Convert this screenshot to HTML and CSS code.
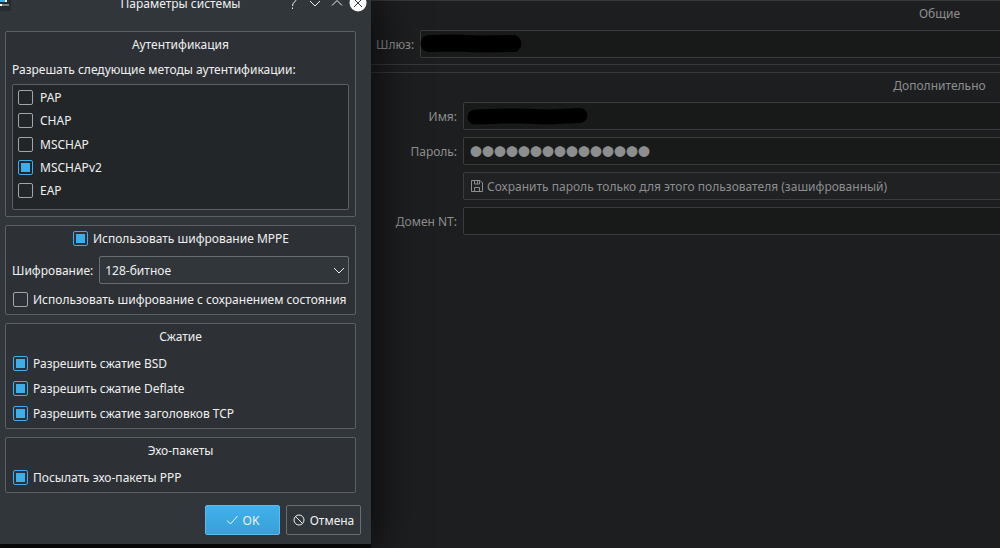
FILE: index.html
```html
<!DOCTYPE html>
<html lang="ru">
<head>
<meta charset="utf-8">
<title>Параметры системы</title>
<link rel="stylesheet" href="styles.css">
</head>
<body>
<div class="screen">
  <section class="dialog" role="dialog" aria-labelledby="dialog-title">
    <header class="titlebar">
      <svg class="app-icon" width="11" height="11" viewBox="0 0 11 11" aria-hidden="true">
        <path d="M0 5.500h11" stroke="#272b2f" stroke-width="11"/>
        <path d="M0 1h5" stroke="#3daee9" stroke-width="2"/><path d="M5 1h2" stroke="#fff" stroke-width="2"/>
        <path d="M0 5h2" stroke="#fff" stroke-width="2"/><path d="M2 5h7" stroke="#7b7f82" stroke-width="2"/>
      </svg>
      <h1 class="dialog-title" id="dialog-title">Параметры системы</h1>
      <div class="window-buttons">
        <button class="win-btn" aria-label="Справка"><svg width="18" height="18" viewBox="0 0 18 18"><path d="M6 6V5a3.500 3.500 0 1 1 5.500 3Q9.500 9.500 9.500 12M9.500 13.500v1.500"/></svg></button>
        <button class="win-btn" aria-label="Свернуть"><svg width="18" height="18" viewBox="0 0 18 18"><path d="M5 7l5 5 5-5"/></svg></button>
        <button class="win-btn" aria-label="Развернуть"><svg width="18" height="18" viewBox="0 0 18 18"><path d="M5 11.500l5-5 5 5"/></svg></button>
        <button class="win-btn" aria-label="Закрыть"><svg width="18" height="18" viewBox="0 0 18 18"><circle cx="9" cy="9" r="8.500" fill="#fcfcfc" stroke="none"/><path class="cross" d="M5 5l8 8M13 5l-8 8"/></svg></button>
      </div>
    </header>

    <div class="dialog-body">
      <section class="group auth">
        <h2 class="group-title">Аутентификация</h2>
        <p class="hint">Разрешать следующие методы аутентификации:</p>
        <div class="list">
          <label class="check"><input type="checkbox"><span>PAP</span></label>
          <label class="check"><input type="checkbox"><span>CHAP</span></label>
          <label class="check"><input type="checkbox"><span>MSCHAP</span></label>
          <label class="check"><input type="checkbox" checked><span>MSCHAPv2</span></label>
          <label class="check"><input type="checkbox"><span>EAP</span></label>
        </div>
      </section>

      <section class="group mppe">
        <label class="check centered"><input type="checkbox" checked><span>Использовать шифрование MPPE</span></label>
        <div class="field">
          <label for="cipher">Шифрование:</label>
          <div class="combo">
            <select id="cipher"><option>128-битное</option></select>
            <svg class="combo-arrow" width="12" height="8" viewBox="0 0 12 8" aria-hidden="true"><path d="M1 1l5 5 5-5"/></svg>
          </div>
        </div>
        <label class="check"><input type="checkbox"><span>Использовать шифрование с сохранением состояния</span></label>
      </section>

      <section class="group options">
        <h2 class="group-title">Сжатие</h2>
        <label class="check"><input type="checkbox" checked><span>Разрешить сжатие BSD</span></label>
        <label class="check"><input type="checkbox" checked><span>Разрешить сжатие Deflate</span></label>
        <label class="check"><input type="checkbox" checked><span>Разрешить сжатие заголовков TCP</span></label>
      </section>

      <section class="group options">
        <h2 class="group-title">Эхо-пакеты</h2>
        <label class="check"><input type="checkbox" checked><span>Посылать эхо-пакеты PPP</span></label>
      </section>
    </div>

    <footer class="actions">
      <button class="btn primary"><svg width="12" height="12" viewBox="0 0 12 12" aria-hidden="true"><path d="M1 6.500l3.500 3.500L11.500 2"/></svg>OK</button>
      <button class="btn"><svg width="12" height="12" viewBox="0 0 12 12" aria-hidden="true"><circle cx="6" cy="6" r="5"/><path d="M2.500 2.500l7 7"/></svg>Отмена</button>
    </footer>
  </section>

  <main class="settings">
    <section class="panel general">
      <h2 class="group-title">Общие</h2>
      <div class="panel-form">
        <label for="gateway">Шлюз:</label>
        <div class="entry">
          <input id="gateway" type="text">
          <svg class="mask" width="110" height="28" viewBox="0 0 110 28" aria-hidden="true"><path d="M9 13.500L34 13 60 14 93 13.500"/></svg>
        </div>
      </div>
    </section>
    <section class="panel extra">
      <h2 class="group-title">Дополнительно</h2>
      <div class="panel-form">
        <label for="user">Имя:</label>
        <div class="entry">
          <input id="user" type="text">
          <svg class="mask" width="130" height="28" viewBox="0 0 130 28" aria-hidden="true"><path class="thin" d="M12 15L40 14 60 14 84 15 117 13.500"/></svg>
        </div>
        <label for="password">Пароль:</label>
        <div class="entry"><input id="password" class="secret" type="text" value="●●●●●●●●●●●●●●●"></div>
        <span></span>
        <button class="store"><svg width="12" height="12" viewBox="0 0 12 12" aria-hidden="true"><path d="M.5.500H9L11.500 3v8.500H.5zM3.500 11.500V7.500h5v4M3.500.500v3.500h5V.500M6.500 1v2.500"/></svg>Сохранить пароль только для этого пользователя (зашифрованный)</button>
        <label for="domain">Домен NT:</label>
        <div class="entry"><input id="domain" type="text"></div>
      </div>
    </section>
  </main>
</div>
</body>
</html>
```
FILE: styles.css
```css
* {
  box-sizing: border-box;
}

body {
  margin: 0;
  background: #0c0c0c;
  color: #eff0f1;
  font: 12px/17px "Noto Sans", sans-serif;
}

button,
input,
select {
  margin: 0;
  color: inherit;
  font: inherit;
}

h1,
h2,
p {
  margin: 0;
  font-size: 12px;
  font-weight: 400;
}

.screen {
  display: flex;
  align-items: flex-start;
  height: 100vh;
  overflow: hidden;
}

.dialog {
  z-index: 1;
  flex: none;
  width: 371px;
  background: #31363b;
  box-shadow: 0 0 40px 6px #000000b0;
}

.titlebar {
  display: grid;
  grid-template-columns: 1fr auto 1fr;
  align-items: center;
  height: 28px;
  margin-top: -11px;
  padding-right: 10px;
}

.app-icon {
  align-self: end;
  margin-bottom: 6px;
}

.window-buttons {
  display: flex;
  justify-content: flex-end;
  gap: 4px;
  margin-right: -6px;
}

.win-btn {
  display: flex;
  padding: 0;
  border: 0;
  background: none;
}

svg {
  flex: none;
  fill: none;
  stroke: #eff0f1;
}

.cross {
  stroke: #31363b;
}

.dialog-body {
  display: flex;
  flex-direction: column;
  gap: 8px;
  padding: 14px 15px 0 5px;
}

.group {
  display: flex;
  flex-direction: column;
  padding: 4px 6px 6px;
  border: 1px solid #5c6064;
  border-radius: 2px;
  background: #2d3034;
}

.group-title {
  text-align: center;
}

.hint {
  margin: 8px 0 6px;
}

.list {
  display: flex;
  flex-direction: column;
  justify-content: space-between;
  min-height: 126px;
  padding: 4px 5px 10px;
  border: 1px solid #5c6064;
  border-radius: 2px;
  background: #232629;
}

.check {
  display: flex;
  align-items: center;
  gap: 5px;
  padding-left: 1px;
}

.list .check {
  gap: 7px;
  padding-left: 0;
}

.centered {
  align-self: center;
}

.check input {
  appearance: none;
  width: 15px;
  height: 15px;
  padding: 2px;
  border: 1px solid #a1a5a8;
  border-radius: 2px;
}

.check input:checked {
  border-color: #3daee9;
  background: #3daee9 content-box;
}

.field {
  display: flex;
  align-items: center;
  gap: 6px;
  margin: 9px 0 7px;
}

.combo {
  position: relative;
  flex: 1;
}

.combo select {
  display: block;
  appearance: none;
  width: 100%;
  height: 28px;
  padding: 0 5px;
  border: 1px solid #6a6e72;
  border-radius: 2px;
  background: #31363b;
}

.combo-arrow {
  position: absolute;
  top: 11px;
  right: 4px;
}

.options {
  gap: 8px;
}

.options .group-title {
  margin-bottom: 2px;
}

.actions {
  display: flex;
  justify-content: flex-end;
  gap: 6px;
  padding: 12px 10px 9px;
}

.btn {
  display: flex;
  align-items: center;
  justify-content: center;
  gap: 5px;
  width: 75px;
  height: 30px;
  padding: 0;
  border: 1px solid #6a6e72;
  border-radius: 2px;
  background: #31363b;
}

.primary {
  border-color: #5bbcf0;
  background: linear-gradient(#40b1ee, #389fd6);
}

.settings {
  flex: 1;
  align-self: stretch;
  min-width: 0;
  overflow: hidden;
  background: #1d1e20;
  color: #8d8e8f;
}

.panel {
  min-width: 1138px;
  padding: 4px 6px 6px 5px;
  border: solid #38393b;
  border-width: 1px 0;
}

.extra {
  min-height: 480px;
  margin-top: 7px;
}

.panel-form {
  display: grid;
  grid-template-columns: auto 1fr;
  align-items: center;
  gap: 7px 6px;
  margin-top: 8px;
}

.extra .panel-form {
  grid-template-columns: 81px 1fr;
}

.panel-form label {
  text-align: right;
}

.entry {
  position: relative;
}

.entry input,
.store {
  display: flex;
  align-items: center;
  gap: 4px;
  width: 100%;
  height: 28px;
  padding: 0 6px;
  border: 1px solid #3a3c3c;
  border-radius: 2px;
  background: #181a19;
}

.store {
  padding-left: 7px;
  background: #1f2123;
}

.store svg {
  stroke: #8d8e8f;
}

.entry .secret {
  font: 12px/18px "Noto Sans CJK SC", sans-serif;
}

.mask {
  position: absolute;
  top: 0;
  left: 0;
}

.mask path {
  stroke: #000;
  stroke-width: 17;
  stroke-linecap: round;
  stroke-linejoin: round;
}

.mask .thin {
  stroke-width: 15;
}
```
